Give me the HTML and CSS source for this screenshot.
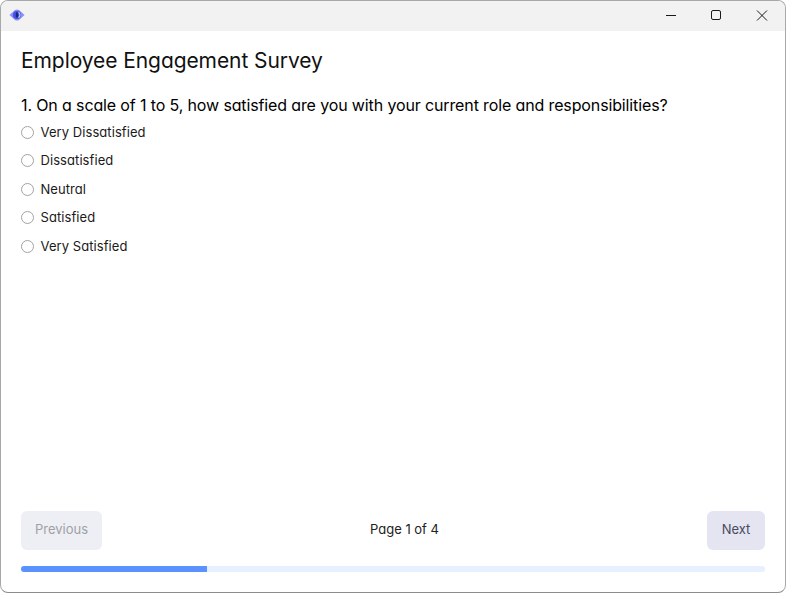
FILE: index.html
```html
<!DOCTYPE html>
<html lang="en">
<head>
<meta charset="utf-8">
<title>Employee Engagement Survey</title>
<link rel="stylesheet" href="styles.css">
</head>
<body>
<div class="window">
  <header class="titlebar">
    <svg class="app-icon" width="16" height="12" viewBox="0 0 16 12">
      <path d="M0.5 6 L6 1 Q8 -0.2 10 1 L15.5 6 L10 11 Q8 12.2 6 11 Z" fill="#8f8cf5"/>
      <circle cx="8" cy="6" r="4" fill="#3f53e0"/>
      <ellipse cx="8" cy="6" rx="1.2" ry="3" fill="#1b2a78"/>
      <path d="M9.5 3.2 A3.4 3.4 0 0 1 9.5 8.8" stroke="#b9d4ff" stroke-width="1.2" fill="none"/>
    </svg>
    <div class="controls">
      <svg class="ctl" width="46" height="30" viewBox="0 0 46 30"><path d="M19 14.5H29" stroke="#1a1a1a"/></svg>
      <svg class="ctl" width="46" height="30" viewBox="0 0 46 30"><rect x="18.5" y="9.5" width="9" height="9" rx="1.5" fill="none" stroke="#1a1a1a"/></svg>
      <svg class="ctl" width="46" height="30" viewBox="0 0 46 30"><path d="M18 9.5L28 19.5M28 9.5L18 19.5" stroke="#1a1a1a" fill="none"/></svg>
    </div>
  </header>
  <main class="content">
    <h1 class="title">Employee Engagement Survey</h1>
    <h2 class="question">1. On a scale of 1 to 5, how satisfied are you with your current role and responsibilities?</h2>
    <ul class="options">
      <li class="option"><span class="radio"></span>Very Dissatisfied</li>
      <li class="option"><span class="radio"></span>Dissatisfied</li>
      <li class="option"><span class="radio"></span>Neutral</li>
      <li class="option"><span class="radio"></span>Satisfied</li>
      <li class="option"><span class="radio"></span>Very Satisfied</li>
    </ul>
    <div class="spacer"></div>
    <div class="nav">
      <button class="btn btn-disabled">Previous</button>
      <span class="page">Page 1 of 4</span>
      <button class="btn btn-next">Next</button>
    </div>
    <div class="progress"><div class="bar"></div></div>
  </main>
</div>
</body>
</html>
```
FILE: styles.css
```css
* { box-sizing: border-box; }
html, body { margin: 0; height: 100%; background: #fff; }
body { font-family: Inter, "Noto Sans", sans-serif; font-feature-settings: "cv11" 1; color: #111; }
.window {
  width: 786px; height: 593px; display: flex; flex-direction: column;
  border: 1px solid #a8a8a8; border-bottom-color: #8c8c8c; border-radius: 8px; overflow: hidden; background: #fff;
}
.titlebar { height: 30px; flex: none; background: #f2f2f2; display: flex; align-items: center; justify-content: space-between; padding-left: 8px; }
.app-icon { display: block; margin-bottom: 2px; }
.controls { display: flex; }
.ctl { display: block; }
.content { flex: 1; display: flex; flex-direction: column; padding: 17px 20px 20px; }
.title { margin: 0; font-size: 21px; line-height: 26px; font-weight: 400; letter-spacing: -0.08px; }
.question { margin: 21px 0 0; font-size: 16px; line-height: 20px; font-weight: 400; letter-spacing: -0.13px; color: #000; }
.options { list-style: none; margin: 2.5px 0 0; padding: 0; }
.option { display: flex; align-items: center; height: 28.5px; font-size: 13px; letter-spacing: 0.07px; color: #1a1a1a; }
.radio { width: 13px; height: 13px; border: 1px solid #a2a2a2; border-radius: 50%; margin: 1px 6.5px 0 0; background: #fff; }
.spacer { flex: 1; }
.nav { display: flex; align-items: center; justify-content: space-between; }
.btn { border: 0; height: 39px; border-radius: 6px; font: inherit; font-size: 13px; padding: 0 0 3px; }
.btn-disabled { width: 81px; background: #eeeff4; color: #a0a0a8; }
.btn-next { width: 58px; background: #e4e5f0; color: #4a4a60; }
.page { font-size: 13px; color: #222; margin-bottom: 3px; }
.progress { margin-top: 16px; height: 6px; background: #e6f0ff; border-radius: 3px; overflow: hidden; }
.bar { width: 25%; height: 100%; background: #5a93ff; }
```
